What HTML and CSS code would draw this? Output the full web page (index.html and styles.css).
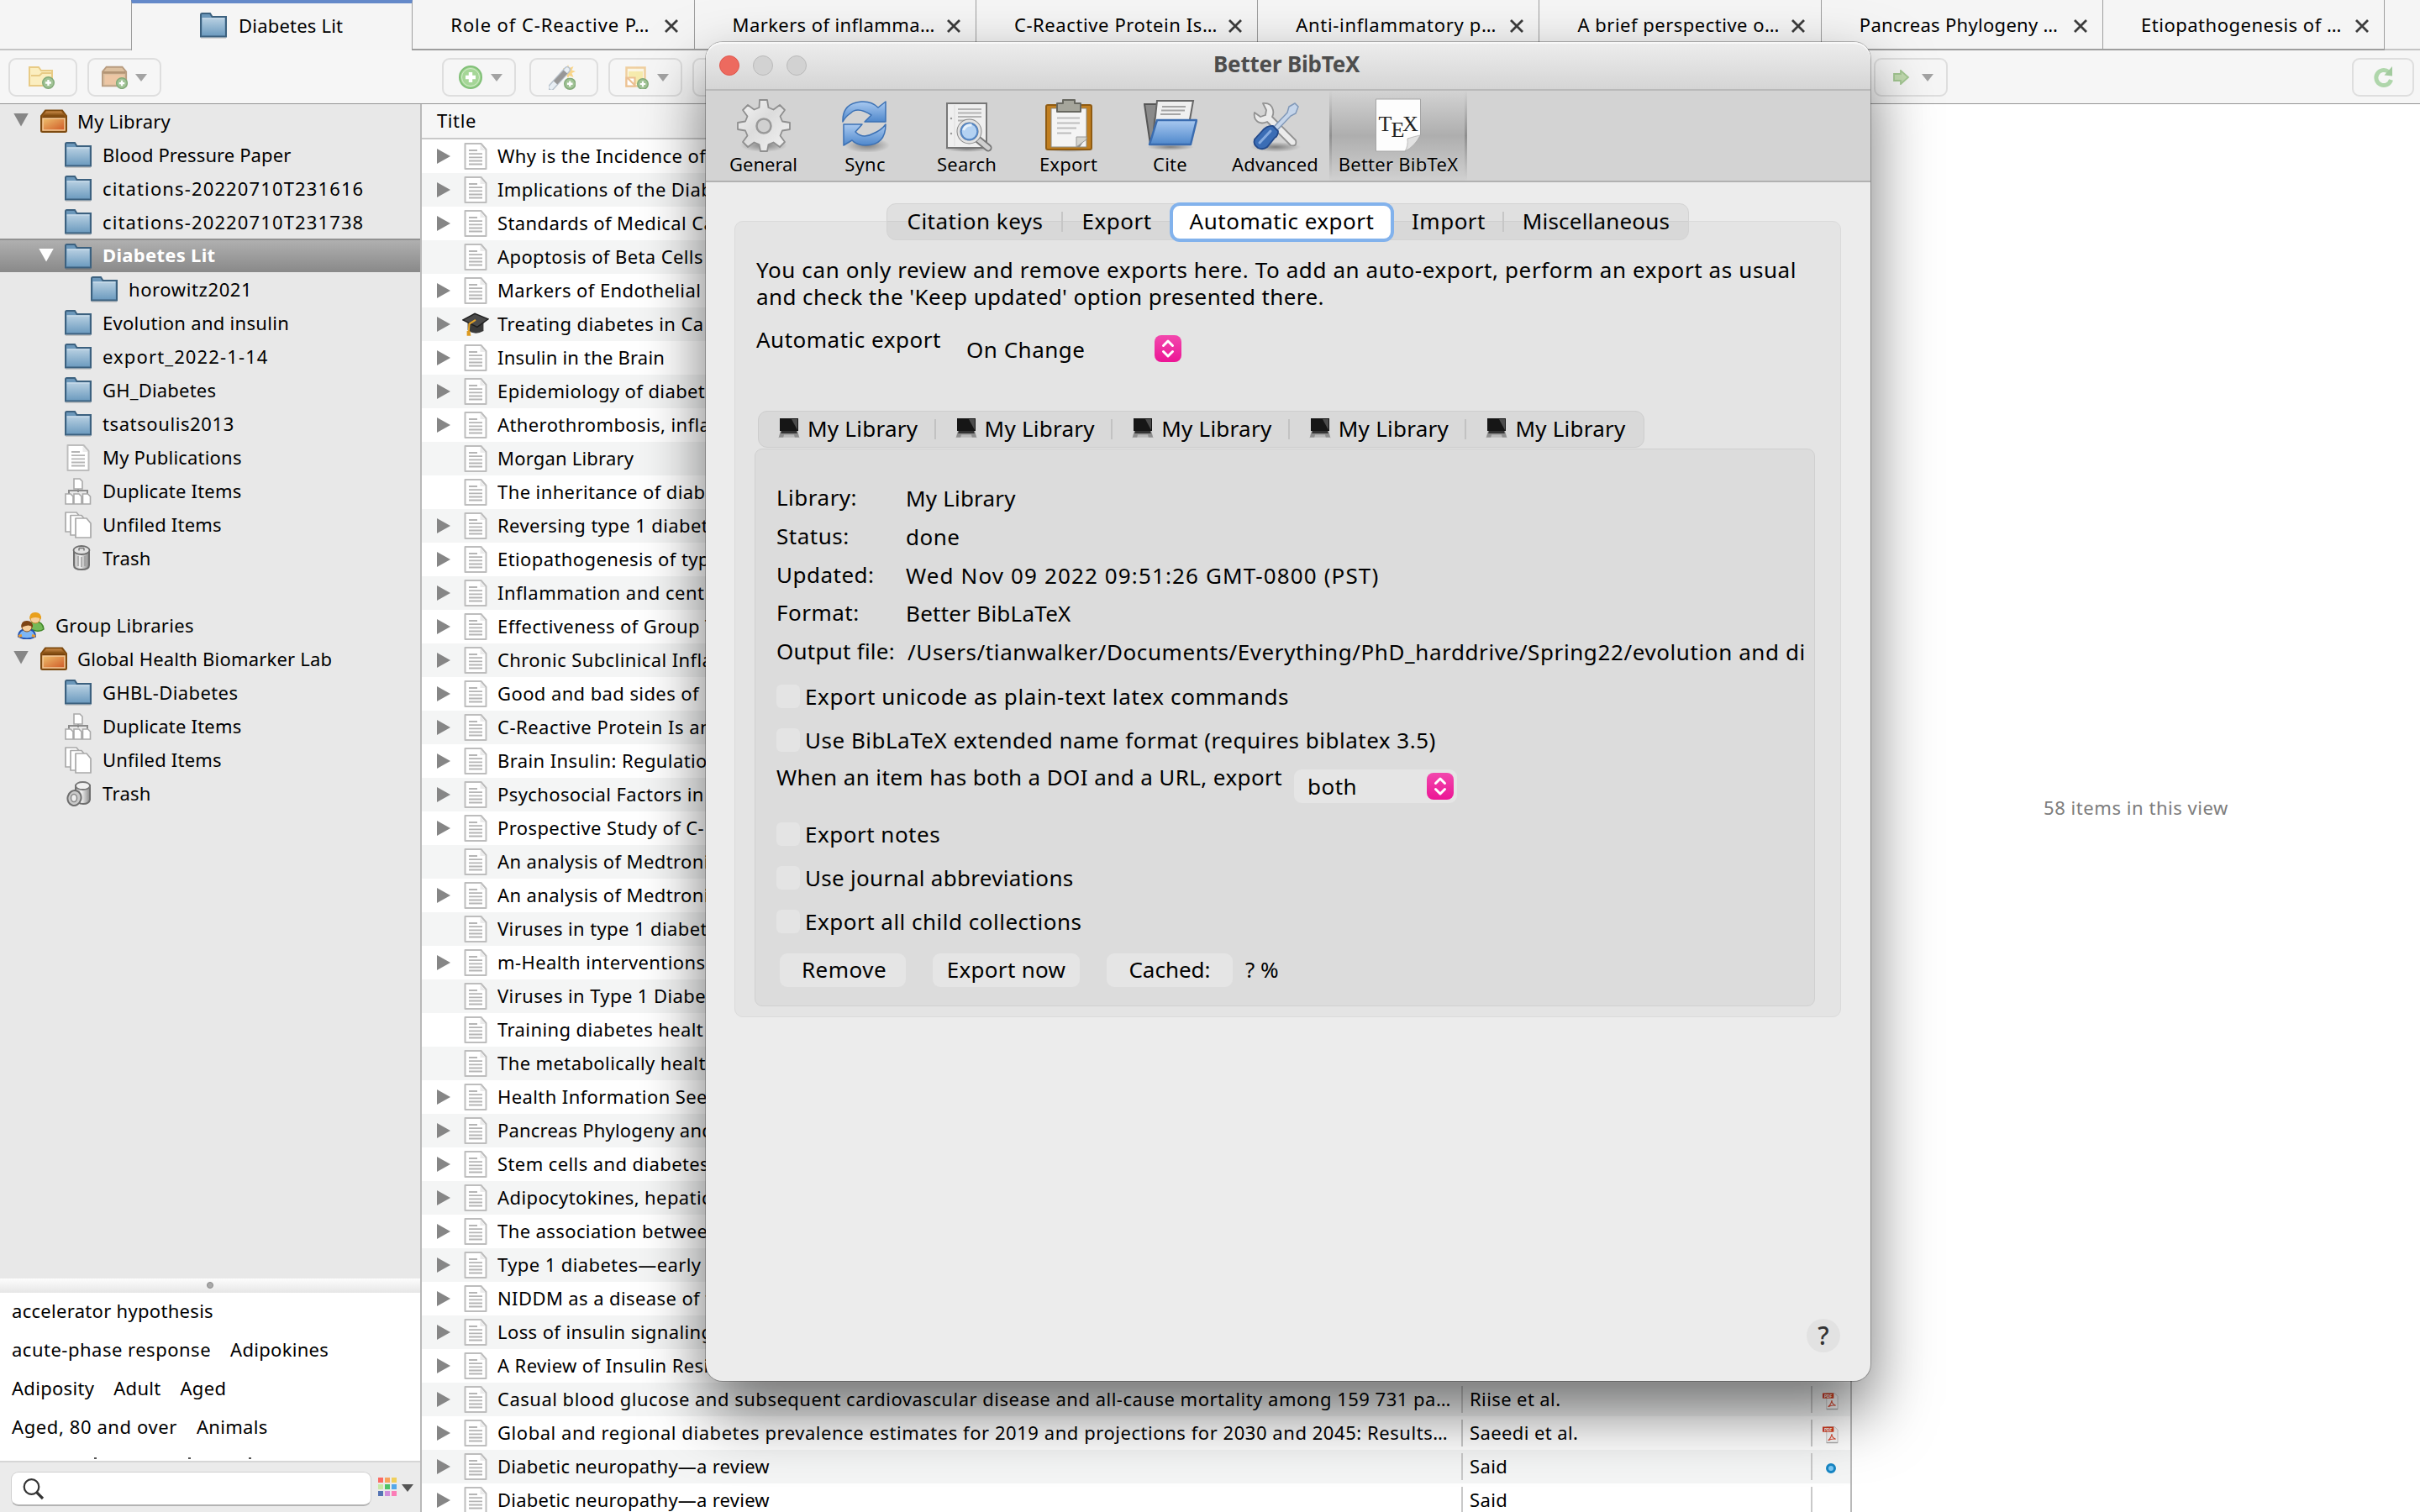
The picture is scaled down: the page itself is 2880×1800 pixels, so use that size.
FILE: index.html
```html
<!DOCTYPE html>
<html lang="en">
<head>
<meta charset="utf-8">
<title>Diabetes Lit</title>
<link rel="stylesheet" href="styles.css">
</head>
<body>
<div class="app">
  <header class="tabs">
    <div class="tab-gap"></div>
    <div class="tab on"><svg class="i32"><use href="#folder"/></svg><span class="t">Diabetes Lit</span></div>
    <div class="tab"><span class="t k9">Role of C-Reactive P…</span><svg class="cx"><use href="#x"/></svg></div>
    <div class="tab"><span class="t k4">Markers of inflamma…</span><svg class="cx"><use href="#x"/></svg></div>
    <div class="tab"><span class="t k6">C-Reactive Protein Is…</span><svg class="cx"><use href="#x"/></svg></div>
    <div class="tab"><span class="t k7">Anti-inflammatory p…</span><svg class="cx"><use href="#x"/></svg></div>
    <div class="tab"><span class="t k5">A brief perspective o…</span><svg class="cx"><use href="#x"/></svg></div>
    <div class="tab"><span class="t k3">Pancreas Phylogeny …</span><svg class="cx"><use href="#x"/></svg></div>
    <div class="tab"><span class="t k5">Etiopathogenesis of …</span><svg class="cx"><use href="#x"/></svg></div>
    <div class="tab-rest"></div>
  </header>

  <div class="bar">
    <div class="bar-left">
      <span class="btn w82"><svg class="bi" viewBox="0 0 32 30"><path d="M2 3h11l3 4h13v18H2z" fill="#fbeec0" stroke="#e8cb86" stroke-width="2"/><path d="M4 13h10l3-3h11" fill="none" stroke="#e8cb86" stroke-width="2"/><use href="#plus" x="17" y="14" width="15" height="15"/></svg></span>
      <span class="btn w88"><svg class="bi" viewBox="0 0 34 30"><path d="M6 2h20l5 6v18H1V8z" fill="#dcc0a0" stroke="#b89c80" stroke-width="2"/><path d="M2 9h28" stroke="#b39474" stroke-width="3"/><path d="M4 12h24v12H4z" fill="#edc6a4"/><use href="#plus" x="18" y="15" width="15" height="15"/></svg><svg class="dd"><use href="#tri"/></svg></span>
    </div>
    <div class="bar-mid">
      <span class="btn w88"><svg class="bi28" viewBox="0 0 28 28"><circle cx="14" cy="14" r="13" fill="#a5d697" stroke="#81c077" stroke-width="2"/><circle cx="14" cy="14" r="10.500" fill="none" stroke="#d3ecca" stroke-width="1"/><path d="M14 8v12M8 14h12" stroke="#fff" stroke-width="4.400"/></svg><svg class="dd"><use href="#tri"/></svg></span>
      <span class="btn w82"><svg class="bi" viewBox="0 0 32 30"><path d="M23 0l1.500 4 5-2-2 4.500 4.500 1.500-4.500 2 2 5-5-2-1.500 3-2-4-4-1 2-3-2-4 4 1z" fill="#f9d58a"/><path d="M3 27L22 6" stroke="#b9c3cd" stroke-width="8" stroke-linecap="round"/><path d="M3 27L22 6" stroke="#e8eef4" stroke-width="5" stroke-linecap="round"/><path d="M8 21.500L20 8.500" stroke="#979797" stroke-width="6"/><use href="#plus" x="18" y="15.500" width="14.500" height="14.500"/></svg></span>
      <span class="btn w88"><svg class="bi28" viewBox="0 0 28 28"><path d="M1.500 2.500h22v22h-22z" fill="#fbf6e4" stroke="#f0cf9f" stroke-width="2.500"/><path d="M4 7h17v15H4z" fill="#f6ebad"/><path d="M1.500 14.500h10v10h-10z M3 15l9 9" fill="#fff" stroke="#ecc193" stroke-width="2.200"/><use href="#plus" x="14" y="15" width="14" height="14"/></svg><svg class="dd"><use href="#tri"/></svg></span>
      <span class="btn w88"></span>
    </div>
    <div class="bar-right">
      <span class="btn w86"><svg class="arr" viewBox="0 0 20 18"><path d="M1 5h8V1l9 8-9 8v-4H1z" fill="#c2dbb0" stroke="#a4c893" stroke-width="1.800"/></svg><svg class="dd"><use href="#tri"/></svg></span>
      <span class="btn w74"><svg class="ref" viewBox="0 0 26 28"><path d="M21.500 17a9 9 0 1 1-3-9.500" fill="none" stroke="#afd6ab" stroke-width="5"/><path d="M13.500 11.500L23 12.500V1z" fill="#a3cb9f"/></svg></span>
    </div>
  </div>

  <main class="main">
    <aside class="side">
      <ul class="tree">
        <li class="l0"><i class="dn"></i><svg class="bx"><use href="#box"/></svg><span class="t">My Library</span></li>
        <li class="l1"><svg class="i32"><use href="#folder"/></svg><span class="t k1">Blood Pressure Paper</span></li>
        <li class="l1"><svg class="i32"><use href="#folder"/></svg><span class="t k11">citations-20220710T231616</span></li>
        <li class="l1"><svg class="i32"><use href="#folder"/></svg><span class="t k11">citations-20220710T231738</span></li>
        <li class="l1 sel"><i class="dn"></i><svg class="i32"><use href="#folder"/></svg><span class="t k3">Diabetes Lit</span></li>
        <li class="l2"><svg class="i32"><use href="#folder"/></svg><span class="t k6">horowitz2021</span></li>
        <li class="l1"><svg class="i32"><use href="#folder"/></svg><span class="t k3">Evolution and insulin</span></li>
        <li class="l1"><svg class="i32"><use href="#folder"/></svg><span class="t k11">export_2022-1-14</span></li>
        <li class="l1"><svg class="i32"><use href="#folder"/></svg><span class="t">GH_Diabetes</span></li>
        <li class="l1"><svg class="i32"><use href="#folder"/></svg><span class="t k6">tsatsoulis2013</span></li>
        <li class="l1"><svg class="d32"><use href="#doc"/></svg><span class="t">My Publications</span></li>
        <li class="l1"><svg class="i32"><use href="#dup"/></svg><span class="t">Duplicate Items</span></li>
        <li class="l1"><svg class="i32"><use href="#unf"/></svg><span class="t">Unfiled Items</span></li>
        <li class="l1"><svg class="tr"><use href="#trash"/></svg><span class="t k3">Trash</span></li>
        <li></li>
        <li class="lg"><svg class="i32"><use href="#people"/></svg><span class="t k3">Group Libraries</span></li>
        <li class="l0"><i class="dn"></i><svg class="bx"><use href="#box"/></svg><span class="t">Global Health Biomarker Lab</span></li>
        <li class="l1"><svg class="i32"><use href="#folder"/></svg><span class="t k4">GHBL-Diabetes</span></li>
        <li class="l1"><svg class="i32"><use href="#dup"/></svg><span class="t">Duplicate Items</span></li>
        <li class="l1"><svg class="i32"><use href="#unf"/></svg><span class="t">Unfiled Items</span></li>
        <li class="l1"><svg class="tr2"><use href="#trash2"/></svg><span class="t k3">Trash</span></li>
      </ul>
      <div class="split"><i></i></div>
      <div class="tags">
        <p><span class="k3">accelerator hypothesis</span></p>
        <p><span class="k5">acute-phase response</span><span>Adipokines</span></p>
        <p><span>Adiposity</span><span>Adult</span><span>Aged</span></p>
        <p><span class="k6">Aged, 80 and over</span><span>Animals</span></p>
        <p class="cut"><i></i><i></i><i></i></p>
      </div>
      <div class="find">
        <div class="field"><svg viewBox="0 0 28 28"><circle cx="11.500" cy="11" r="8.800" fill="none" stroke="#333" stroke-width="2.200"/><path d="M17.500 17.500L25 25" stroke="#333" stroke-width="3.200"/></svg></div>
        <div class="sw"><i class="c1"></i><i class="c2"></i><i class="c3"></i><i class="c4"></i><i class="c5"></i><i class="c6"></i><i class="c7"></i><i class="c8"></i><i class="c9"></i></div>
        <svg class="dd dark"><use href="#tri"/></svg>
      </div>
    </aside>

    <section class="list">
      <div class="head">Title</div>
      <ul class="rows">
        <li><i class="tw"></i><svg><use href="#doc"/></svg><span class="t">Why is the Incidence of</span></li>
        <li><i class="tw"></i><svg><use href="#doc"/></svg><span class="t">Implications of the Diab</span></li>
        <li><i class="tw"></i><svg><use href="#doc"/></svg><span class="t">Standards of Medical Ca</span></li>
        <li><i class="tw no"></i><svg><use href="#doc"/></svg><span class="t">Apoptosis of Beta Cells</span></li>
        <li><i class="tw"></i><svg><use href="#doc"/></svg><span class="t">Markers of Endothelial</span></li>
        <li><i class="tw"></i><svg class="cap"><use href="#cap"/></svg><span class="t">Treating diabetes in Ca</span></li>
        <li><i class="tw"></i><svg><use href="#doc"/></svg><span class="t k2">Insulin in the Brain</span></li>
        <li><i class="tw"></i><svg><use href="#doc"/></svg><span class="t">Epidemiology of diabete</span></li>
        <li><i class="tw"></i><svg><use href="#doc"/></svg><span class="t">Atherothrombosis, infla</span></li>
        <li><i class="tw no"></i><svg><use href="#doc"/></svg><span class="t k2">Morgan Library</span></li>
        <li><i class="tw no"></i><svg><use href="#doc"/></svg><span class="t">The inheritance of diab</span></li>
        <li><i class="tw"></i><svg><use href="#doc"/></svg><span class="t">Reversing type 1 diabet</span></li>
        <li><i class="tw"></i><svg><use href="#doc"/></svg><span class="t">Etiopathogenesis of typ</span></li>
        <li><i class="tw"></i><svg><use href="#doc"/></svg><span class="t k5">Inflammation and centr</span></li>
        <li><i class="tw"></i><svg><use href="#doc"/></svg><span class="t">Effectiveness of Group T</span></li>
        <li><i class="tw"></i><svg><use href="#doc"/></svg><span class="t">Chronic Subclinical Infla</span></li>
        <li><i class="tw"></i><svg><use href="#doc"/></svg><span class="t">Good and bad sides of</span></li>
        <li><i class="tw"></i><svg><use href="#doc"/></svg><span class="t k5">C-Reactive Protein Is an</span></li>
        <li><i class="tw"></i><svg><use href="#doc"/></svg><span class="t">Brain Insulin: Regulatio</span></li>
        <li><i class="tw"></i><svg><use href="#doc"/></svg><span class="t">Psychosocial Factors in</span></li>
        <li><i class="tw"></i><svg><use href="#doc"/></svg><span class="t">Prospective Study of C-</span></li>
        <li><i class="tw no"></i><svg><use href="#doc"/></svg><span class="t">An analysis of Medtroni</span></li>
        <li><i class="tw"></i><svg><use href="#doc"/></svg><span class="t">An analysis of Medtroni</span></li>
        <li><i class="tw no"></i><svg><use href="#doc"/></svg><span class="t">Viruses in type 1 diabet</span></li>
        <li><i class="tw"></i><svg><use href="#doc"/></svg><span class="t">m-Health interventions</span></li>
        <li><i class="tw no"></i><svg><use href="#doc"/></svg><span class="t">Viruses in Type 1 Diabe</span></li>
        <li><i class="tw no"></i><svg><use href="#doc"/></svg><span class="t">Training diabetes healt</span></li>
        <li><i class="tw no"></i><svg><use href="#doc"/></svg><span class="t">The metabolically healt</span></li>
        <li><i class="tw"></i><svg><use href="#doc"/></svg><span class="t">Health Information Seek</span></li>
        <li><i class="tw"></i><svg><use href="#doc"/></svg><span class="t k2">Pancreas Phylogeny and</span></li>
        <li><i class="tw"></i><svg><use href="#doc"/></svg><span class="t">Stem cells and diabetes</span></li>
        <li><i class="tw"></i><svg><use href="#doc"/></svg><span class="t">Adipocytokines, hepatic</span></li>
        <li><i class="tw"></i><svg><use href="#doc"/></svg><span class="t">The association betwee</span></li>
        <li><i class="tw"></i><svg><use href="#doc"/></svg><span class="t">Type 1 diabetes—early</span></li>
        <li><i class="tw"></i><svg><use href="#doc"/></svg><span class="t">NIDDM as a disease of t</span></li>
        <li><i class="tw"></i><svg><use href="#doc"/></svg><span class="t">Loss of insulin signaling</span></li>
        <li><i class="tw"></i><svg><use href="#doc"/></svg><span class="t">A Review of Insulin Resi</span></li>
        <li><i class="tw"></i><svg><use href="#doc"/></svg><span class="t k5">Casual blood glucose and subsequent cardiovascular disease and all-cause mortality among 159 731 pa…</span><span class="by">Riise et al.</span><span class="at"><svg class="pdf"><use href="#pdf"/></svg></span></li>
        <li><i class="tw"></i><svg><use href="#doc"/></svg><span class="t k55">Global and regional diabetes prevalence estimates for 2019 and projections for 2030 and 2045: Results…</span><span class="by">Saeedi et al.</span><span class="at"><svg class="pdf"><use href="#pdf"/></svg></span></li>
        <li><i class="tw"></i><svg><use href="#doc"/></svg><span class="t k25">Diabetic neuropathy—a review</span><span class="by">Said</span><span class="at"><i class="dot"></i></span></li>
        <li><i class="tw"></i><svg><use href="#doc"/></svg><span class="t k25">Diabetic neuropathy—a review</span><span class="by">Said</span><span class="at"></span></li>
      </ul>
    </section>

    <section class="info"><span class="k55">58 items in this view</span></section>
  </main>
</div>

<div class="win">
  <div class="title"><i class="red"></i><i></i><i></i><b>Better BibTeX</b></div>
  <nav class="panes">
    <div class="pane"><svg viewBox="0 0 64 64"><ellipse cx="32" cy="56" rx="28" ry="8" fill="url(#gShade)"/><path d="M27 2h9l1.500 9 6 2.500L51 8l6 6-5.500 7.500 2.500 6 9 1.500v8l-9 1.500-2.500 6L57 52l-6 6-7.500-5.500-6 2.500-1.500 8h-8l-1.500-8-6-2.500L13 58l-6-6 5.500-7.500-2.500-6L1 37v-8l9-1.500 2.500-6L7 14l6-6 7.500 5.500 6-2.500z" fill="url(#gGear)" stroke="#8f8f8f" stroke-width="1.800" stroke-linejoin="round"/><circle cx="32" cy="33" r="8.500" fill="#d0d0d0" stroke="#999" stroke-width="2.500"/></svg><span class="k0">General</span></div>
    <div class="pane"><svg viewBox="0 0 64 64"><ellipse cx="34" cy="56" rx="27" ry="9" fill="url(#gShade)"/><g stroke="#3d72b5" stroke-width="1.500" stroke-linejoin="round"><path d="M5 28Q4 6 27 4q12-1 20 7l9-7v24H31l8-8Q22 9 14 18q-6 4-9 10z" fill="url(#gBlue)"/><path d="M56 31q0 25-24 25-10 0-16-6l-10 6V31h22l-8 9q9 9 21 2 10-4 15-11z" fill="url(#gBlue)"/></g></svg><span>Sync</span></div>
    <div class="pane"><svg viewBox="0 0 64 64"><ellipse cx="32" cy="60" rx="28" ry="4" fill="url(#gShade)"/><path d="M8 6h47v53H8z" fill="#efefef" stroke="#777" stroke-width="2"/><path d="M21 13h28M21 17.500h28M21 22h28M21 26.500h16" stroke="#b3b3b3" stroke-width="2"/><path d="M17 8v49" stroke="#ddd" stroke-width="1"/><circle cx="13" cy="24" r="1.200" fill="#999"/><circle cx="13" cy="42" r="1.200" fill="#999"/><path d="M45 49l12 10" stroke="#777" stroke-width="9" stroke-linecap="round"/><path d="M45 49l12 10" stroke="#cfcfcf" stroke-width="5.500" stroke-linecap="round"/><circle cx="34.500" cy="39.500" r="12.500" fill="#a9cbf0" stroke="#888" stroke-width="5"/><circle cx="34.500" cy="39.500" r="12.500" fill="none" stroke="#e3e3e3" stroke-width="3"/><circle cx="34.500" cy="39.500" r="9.800" fill="#b4d2f2" stroke="#5687c4" stroke-width="2"/><path d="M27.500 38q3-7 10-6" stroke="#e6f1fc" stroke-width="3" fill="none"/></svg><span>Search</span></div>
    <div class="pane"><svg viewBox="0 0 64 64"><ellipse cx="32" cy="61" rx="30" ry="3" fill="url(#gShade)"/><rect x="5" y="8" width="54" height="53" rx="2" fill="#c17f20" stroke="#8f5b12" stroke-width="2"/><path d="M11 12h42v46H11z" fill="#f4f4f4" stroke="#8a8a80" stroke-width="1"/><path d="M18 23.500h27M18 29.500h27M18 35.500h23M18 41.500h17" stroke="#bdbdbd" stroke-width="2"/><path d="M53 46H41v12h4z" fill="#8c8c88"/><path d="M41 58V46l12 0v3z" fill="#d5d5d0" stroke="#999" stroke-width="1"/><path d="M25 2h14v4h7v10H18V6h7z" fill="#a5a59b" stroke="#67675f" stroke-width="2" stroke-linejoin="round"/></svg><span>Export</span></div>
    <div class="pane"><svg viewBox="0 0 64 64"><ellipse cx="32" cy="58" rx="28" ry="4" fill="url(#gShade)"/><path d="M1 7h16l-4 20-2 28H8z" fill="#8a8a8a" stroke="#555" stroke-width="2"/><path d="M16 3h43l-5 28-42 10z" fill="#f0f0f0" stroke="#666" stroke-width="2"/><path d="M22 10h28M21 14.500h28M20 19h24" stroke="#a5a5a5" stroke-width="2"/><path d="M16 26h47l-7 29H7z" fill="url(#gBlue)" stroke="#3a6cb0" stroke-width="2.500" stroke-linejoin="round"/></svg><span>Cite</span></div>
    <div class="pane adv"><svg viewBox="0 0 64 64"><ellipse cx="32" cy="58" rx="30" ry="6" fill="url(#gShade)"/><path d="M17 6q10-1 12 8 1 5-1 8l28 28q2 8-6 6L22 28q-9 4-14-3-2-4-1-8l7 5 6-2 1-6z" fill="#ebebeb" stroke="#929292" stroke-width="1.800" stroke-linejoin="round"/><path d="M48 10l7-4 4 4-3 8-6 3-16 17-4-4 16-17z" fill="#c5d5ea" stroke="#8098b8" stroke-width="1.500"/><path d="M29 33l6 6q0 6-4 8l-9 11q-5 4-11 1-6-4-4-10l9-10q6-7 13-6z" fill="#3b6db5" stroke="#23498a" stroke-width="1.800"/><path d="M26 39L13 53" stroke="#86abdf" stroke-width="3" stroke-linecap="round"/></svg><span>Advanced</span></div>
    <div class="pane bbt"><svg viewBox="0 0 64 64"><path d="M5.500 1h53v43q-3 8-18 19h-35z" fill="#fdfdfd" stroke="#a5a5a5" stroke-width="1"/><path d="M58 44q-5 1-15 4 1 9-3 15 12-6 18-19z" fill="#e2e2e2" stroke="#b0b0b0" stroke-width=".8"/><text class="tex" x="8.500" y="39">T</text><text class="tex" x="23.500" y="46">E</text><text class="tex" x="37" y="39">X</text></svg><span>Better BibTeX</span></div>
  </nav>
  <div class="body">
    <div class="seg">
      <span class="s1">Citation keys</span><span class="s2">Export</span><span class="s3 cur">Automatic export</span><span class="s4">Import</span><span class="s5 k2">Miscellaneous</span>
    </div>
    <div class="panel">
      <p class="note"><span class="k6">You can only review and remove exports here. To add an auto-export, perform an export as usual</span><br><span class="k4">and check the 'Keep updated' option presented there.</span></p>
      <div class="auto"><label>Automatic export</label><span class="pop">On Change</span><svg class="st"><use href="#step"/></svg></div>
      <div class="libs">
        <span><svg><use href="#laptop"/></svg>My Library</span><span><svg><use href="#laptop"/></svg>My Library</span><span><svg><use href="#laptop"/></svg>My Library</span><span><svg><use href="#laptop"/></svg>My Library</span><span><svg><use href="#laptop"/></svg>My Library</span>
      </div>
      <div class="job">
        <dl>
          <dt>Library:</dt><dd class="k2">My Library</dd>
          <dt>Status:</dt><dd>done</dd>
          <dt>Updated:</dt><dd class="k11">Wed Nov 09 2022 09:51:26 GMT-0800 (PST)</dd>
          <dt>Format:</dt><dd class="k25">Better BibLaTeX</dd>
          <dt class="k25">Output file:</dt><dd class="path k6">/Users/tianwalker/Documents/Everything/PhD_harddrive/Spring22/evolution and di</dd>
        </dl>
        <div class="chk"><i></i><span class="k65">Export unicode as plain-text latex commands</span></div>
        <div class="chk"><i></i><span class="k5">Use BibLaTeX extended name format (requires biblatex 3.5)</span></div>
        <div class="doi"><label class="k4">When an item has both a DOI and a URL, export</label><span class="pop2">both<svg class="st"><use href="#step"/></svg></span></div>
        <div class="chk"><i></i><span>Export notes</span></div>
        <div class="chk"><i></i><span class="k3">Use journal abbreviations</span></div>
        <div class="chk"><i></i><span>Export all child collections</span></div>
        <div class="acts"><span class="b1">Remove</span><span class="b2 k3">Export now</span><span class="b3 k0">Cached:</span><label class="k0">? %</label></div>
      </div>
    </div>
    <div class="help">?</div>
  </div>
</div>

<svg class="defs" width="0" height="0" aria-hidden="true">
  <defs>
    <linearGradient id="gFolder" x1="0" y1="0" x2="0" y2="1"><stop offset="0" stop-color="#b4cde0"/><stop offset="1" stop-color="#6f9dc0"/></linearGradient>
    <linearGradient id="gBox" x1="0" y1="0" x2="1" y2="1"><stop offset="0" stop-color="#eebf6c"/><stop offset="1" stop-color="#cf5a27"/></linearGradient>
    <linearGradient id="gLid" x1="0" y1="0" x2="0" y2="1"><stop offset="0" stop-color="#c98a48"/><stop offset="1" stop-color="#7c470c"/></linearGradient>
    <linearGradient id="gSteel" x1="0" y1="0" x2="1" y2="0"><stop offset="0" stop-color="#b5b5b5"/><stop offset=".4" stop-color="#f2f2f2"/><stop offset="1" stop-color="#8a8a8a"/></linearGradient>
    <linearGradient id="gGear" x1="0" y1="0" x2="1" y2="1"><stop offset="0" stop-color="#f6f6f6"/><stop offset=".45" stop-color="#dcdcdc"/><stop offset="1" stop-color="#f4f4f4"/></linearGradient>
    <linearGradient id="gBlue" x1="0" y1="0" x2="0" y2="1"><stop offset="0" stop-color="#a9c9f0"/><stop offset="1" stop-color="#4f88cc"/></linearGradient>
    <linearGradient id="gPink" x1="0" y1="0" x2="0" y2="1"><stop offset="0" stop-color="#f248ad"/><stop offset="1" stop-color="#ec1595"/></linearGradient>
    <radialGradient id="gShade"><stop offset="0" stop-color="#000" stop-opacity=".4"/><stop offset="1" stop-color="#000" stop-opacity="0"/></radialGradient>
  </defs>
  <symbol id="folder" viewBox="0 0 32 32">
    <path d="M1 29.500h30v1.500H1z" fill="#000" opacity=".15"/>
    <path d="M1 28.500V2.500Q1 1 2.500 1H12l2.500 4H31v23.500z" fill="#6b97ba" stroke="#3c617f" stroke-width="2"/>
    <path d="M2.500 7.500h27v19.500h-27z" fill="url(#gFolder)"/>
    <path d="M2.500 7h27" stroke="#d3e3ef" stroke-width="1.500"/>
  </symbol>
  <symbol id="box" viewBox="0 0 32 28">
    <path d="M6 1.500h20L31 8v17.500q0 1.500-1.500 1.500h-27Q1 27 1 25.500V8z" fill="#a3621f" stroke="#7d4a10" stroke-width="2"/>
    <path d="M7 2.500h18l4 5.500H3z" fill="url(#gLid)"/>
    <path d="M2.500 8.500h27v2h-27z" fill="#6d3c08"/>
    <path d="M3 11h26v14H3z" fill="url(#gBox)" stroke="#f3c998" stroke-width="1.500"/>
  </symbol>
  <symbol id="doc" viewBox="0 0 28 32">
    <path d="M1.500 1h19L26.500 8v23h-25z" fill="#fff" stroke="#bdbdbd" stroke-width="2" stroke-linejoin="round"/>
    <path d="M19.500 2v7h6z" fill="#ececec"/>
    <path d="M6 9h10M6 13.200h16M6 17.400h16M6 21.500h16M6 25.500h16" stroke="#b5b5b5" stroke-width="1.800"/>
  </symbol>
  <symbol id="dup" viewBox="0 0 32 32">
    <path d="M16 12v5M5 19v-4h22v4" fill="none" stroke="#8c8c8c" stroke-width="2"/>
    <g fill="#fff" stroke="#a9a9a9" stroke-width="1.600"><path d="M11 1h7l3 3v9H11z"/><path d="M1 19h6l3 3v9H1zM11 19h6l3 3v9h-9zM21.500 19h6l3 3v9h-9z"/></g>
  </symbol>
  <symbol id="unf" viewBox="0 0 32 32">
    <g fill="#fff" stroke="#a9a9a9" stroke-width="1.700" stroke-linejoin="round"><path d="M1 1h13l4 5v18H1z"/><path d="M7 4.500h13l4 5V28H7z"/><path d="M13 8h13l5 6v17H13z"/></g>
  </symbol>
  <symbol id="trash" viewBox="0 0 24 30">
    <path d="M3 6v18q0 5 9 5t9-5V6z" fill="url(#gSteel)" stroke="#6e6e6e" stroke-width="2"/>
    <path d="M8 13v12M12 14v12M16 13v12" stroke="#999" stroke-width="1.400"/>
    <ellipse cx="12" cy="6" rx="9.500" ry="5" fill="#e2e2e2" stroke="#6e6e6e" stroke-width="1.800"/>
    <path d="M9 3.500v3M15 3.500v3M9 3.500h6" stroke="#777" stroke-width="1.500" fill="none"/>
  </symbol>
  <symbol id="trash2" viewBox="0 0 30 30">
    <path d="M11 5v17q2 5 9 5t8-5V5z" fill="url(#gSteel)" stroke="#6e6e6e" stroke-width="2"/>
    <ellipse cx="19.500" cy="5.500" rx="8.500" ry="4.500" fill="#f0f0f0" stroke="#777" stroke-width="1.800"/>
    <ellipse cx="9.500" cy="20" rx="8" ry="9" fill="#c9c9c9" stroke="#6e6e6e" stroke-width="2" transform="rotate(15 9.500 20)"/>
    <ellipse cx="9" cy="20" rx="3.500" ry="4.500" fill="#eee" stroke="#888" stroke-width="1.500"/>
  </symbol>
  <symbol id="people" viewBox="0 0 32 32">
    <path d="M13 20q1-9 8-9 9 0 10 9-3 3-9 2z" fill="#74b957" stroke="#3f8627" stroke-width="1.500"/>
    <circle cx="21" cy="7" r="6" fill="#f7cf9c" stroke="#c98a2a" stroke-width="1"/>
    <path d="M14.500 8q-1-8 6.500-8t7 8q-7-4-13.500 0z" fill="#e9a01c"/>
    <path d="M1 29q0-9 10-9t10 9q-10 5-20 0z" fill="#7db6f5" stroke="#1d4fb0" stroke-width="1.800"/>
    <circle cx="11" cy="17" r="6" fill="#f7cf9c" stroke="#8a5520" stroke-width="1"/>
    <path d="M4.500 18q-1-8 6.500-8t7 8q-4-5-13.500 0z" fill="#7d4414"/>
    <path d="M1 28.500l4-1M21 28.500l-4-1" stroke="#e79a34" stroke-width="3"/>
  </symbol>
  <symbol id="cap" viewBox="0 0 34 30">
    <path d="M7 12v10q9 7 20 1V11z" fill="#3a3a3a"/>
    <path d="M1 9L16 1l17 7-14 10z" fill="#4a4a4a" stroke="#1f1f1f" stroke-width="1.500"/>
    <path d="M17 9L9 14 8 27" fill="none" stroke="#e5a52a" stroke-width="2.200"/>
    <path d="M6 23h4l1 6H6z" fill="#dd9a20"/>
  </symbol>
  <symbol id="x" viewBox="0 0 18 18"><path d="M2 2l14 14M16 2L2 16" stroke="#3c3c3c" stroke-width="2.800"/></symbol>
  <symbol id="tri" viewBox="0 0 14 9"><path d="M0 0h14L7 9z" fill="currentColor"/></symbol>
  <symbol id="plus" viewBox="0 0 14 14"><circle cx="7" cy="7" r="6.300" fill="#a1c396" stroke="#82aa78" stroke-width="1.400"/><path d="M7 3.800v6.400M3.800 7h6.400" stroke="#fff" stroke-width="2.200"/></symbol>
  <symbol id="laptop" viewBox="0 0 26 26">
    <path d="M2 1h22v15H2z" fill="#161616"/><path d="M16 2h7v13z" fill="#4c4c4c"/>
    <path d="M3 16h20l2.500 8.500H.5z" fill="#8e8e8e"/><path d="M4 16h18l.8 3H3.200z" fill="#333"/><path d="M7 20.500h12l1 4H6z" fill="#b9b9b9"/><path d="M.5 24.500h25" stroke="#d8d8d8" stroke-width="1.500"/>
  </symbol>
  <symbol id="step" viewBox="0 0 32 32"><rect width="32" height="32" rx="8" fill="url(#gPink)"/><path d="M10.500 12.500L16 7l5.500 5.500M10.500 19.500L16 25l5.500-5.500" fill="none" stroke="#fff" stroke-width="3" stroke-linecap="round" stroke-linejoin="round"/></symbol>
  <symbol id="pdf" viewBox="0 0 20 22">
    <path d="M5 1h10l4 4v16H5z" fill="#fafafa" stroke="#c6c6c6"/><path d="M5 21h14" stroke="#a9a9a9" stroke-width="1.500"/>
    <path d="M0 1h14v6.500H0z" fill="#d63a1e"/>
    <path d="M7 18q4-3 4.500-8 0 5 5 6.500-5-1-9.500 1.500z" fill="none" stroke="#d9503a" stroke-width="1.200"/>
    <text x="7" y="6.300" text-anchor="middle" class="pdf-t">PDF</text>
  </symbol>
</svg>
</body>
</html>
```
FILE: styles.css
```css
* { box-sizing: border-box; }
body { margin: 0; width: 2880px; height: 1800px; overflow: hidden; background: #fff; color: #000; font: 22px/40px "Noto Sans", "Open Sans", sans-serif; }
ul, dl, dd, p { margin: 0; padding: 0; list-style: none; }
i { display: block; flex: none; }
svg { display: block; flex: none; }
.defs { position: absolute; }
.t { white-space: nowrap; }
.app { display: flex; flex-direction: column; height: 1800px; }

/* tab strip */
.tabs { display: flex; height: 60px; background: #f5f5f5; }
.tab-gap { width: 156px; border-bottom: 2px solid #c4c4c4; }
.tab { width: 335.3px; padding-left: 45px; display: flex; align-items: center; border-right: 1px solid #9e9e9e; border-bottom: 2px solid #9e9e9e; line-height: 60px; }
.tab .t { width: 254px; overflow: hidden; padding-bottom: 1px; }
.tab.on { border: 1px solid #9e9e9e; border-top: 4px solid #6489c9; border-bottom: 0; padding: 0 0 0 81px; gap: 14px; }
.tab.on .t { padding-bottom: 4px; letter-spacing: .2px; }
.tab.on svg { margin-bottom: 2px; }
.cx { width: 18px; height: 18px; margin-top: 4px; }
.tab-rest { flex: 1; border-bottom: 2px solid #c4c4c4; }
.i32 { width: 32px; height: 32px; }

/* toolbar */
.bar { height: 64px; display: flex; background: #f6f6f6; border-bottom: 1px solid #969696; padding: 9px 7px 0 10px; }
.bar-left, .bar-mid, .bar-right { display: flex; gap: 12px; }
.bar-left { width: 516px; }
.bar-mid { gap: 0; width: 1704px; }
.bar-mid .btn { margin-right: 12px; }
.bar-mid .btn:first-child { margin-right: 16px; }
.bar-right { flex: 1; justify-content: space-between; }
.btn { height: 46px; border: 2px solid #dedede; border-radius: 9px; display: flex; align-items: center; padding-left: 18px; gap: 10px; }
.bar-left .w88 { padding-left: 15px; gap: 8px; }
.w82 { width: 82px; padding-left: 21px; } .w88 { width: 88px; } .w86 { width: 88px; padding-left: 21px; gap: 14px; } .w74 { width: 74px; padding-left: 23px; }
.bi { width: 32px; height: 30px; } .bi28 { width: 28px; height: 28px; }
.arr { width: 20px; height: 18px; } .ref { width: 26px; height: 28px; }
.dd { width: 14px; height: 9px; color: #a3a3a3; }
.dd.dark { color: #555; }

.main { flex: 1; display: flex; min-height: 0; }

/* collections */
.side { width: 502px; border-right: 2px solid #b9b9b9; background: #e8e8e8; display: flex; flex-direction: column; }
.tree { height: 1398px; letter-spacing: .2px; }
.tree li { height: 40px; display: flex; align-items: center; }
.tree .t { padding-bottom: 1px; }
.l0 { padding-left: 16px; } .l1 { padding-left: 77px; } .l2 { padding-left: 108px; } .lg { padding-left: 21px; }
.tree .i32, .tree .d32, .tree .tr, .tree .tr2 { margin-right: 13px; }
.tree .i32, .tree .d32, .tree .tr2 { position: relative; top: 1px; }
.dn { width: 18px; height: 16px; background: #868686; clip-path: polygon(0 0, 100% 0, 50% 100%); margin: -3px 14px 0 0; }
.bx { width: 32px; height: 28px; margin-right: 12px; }
.d32 { width: 32px; height: 32px; }
.tr { width: 24px; height: 30px; margin-left: 8px; }
.tr2 { width: 30px; height: 30px; margin-left: 2px; }
.sel { background: linear-gradient(#b0b0b0, #898989); border-top: 2px solid #929292; color: #fff; font-weight: 700; }
.sel .t { margin-top: -3px; }
.l1.sel { padding-left: 46px; }
.sel .dn { background: #fff; margin-right: 13px; }
.split { height: 17px; background: linear-gradient(#fdfdfd, #e6e6e6); display: flex; justify-content: center; align-items: center; }
.split i { width: 8px; height: 8px; border-radius: 50%; background: #a9a9a9; border: 1px solid #8a8a8a; margin-top: -2px; }
.tags { height: 200px; background: #fff; overflow: hidden; padding-left: 14px; line-height: 46px; letter-spacing: .3px; }
.tags p { display: flex; gap: 23px; height: 46px; }
.tags p:first-child { margin-top: -2px; }
.tags .cut { gap: 0; padding-top: 14px; }
.cut i { width: 3px; height: 2px; background: #555; margin-left: 98px; }
.cut i + i { margin-left: 109px; } .cut i + i + i { margin-left: 69px; }
.find { flex: 1; background: #ebebeb; border-top: 2px solid #d6d6d6; display: flex; padding: 11px 0 0 13px; }
.field { width: 429px; height: 41px; background: #fff; border: 1px solid #d0d0d0; border-bottom: 2px solid #b3b3b3; border-radius: 9px; padding: 6px 0 0 12px; }
.field svg { width: 28px; height: 28px; }
.sw { display: grid; grid-template-columns: repeat(3, 6px); grid-auto-rows: 6px; gap: 2px; margin: 7px 6px 0 8px; height: 22px; }
.c1 { background: #fb6b64; } .c2 { background: #f7a35d; } .c3 { background: #f0cf5b; } .c4 { background: #c8e8a5; } .c5 { background: #4cc267; } .c6 { background: #55a8ea; } .c7 { background: #5574b4; } .c8 { background: #d08ddb; } .c9 { background: #fb7db6; }
.find .dd { margin-top: 15px; }

/* items */
.list { width: 1702px; border-right: 2px solid #b9b9b9; overflow: hidden; letter-spacing: .4px; }
.head { height: 42px; border-bottom: 2px solid #c9c9c9; background: #f6f6f6; padding-left: 18px; line-height: 38px; letter-spacing: .6px; }
.rows li { display: flex; height: 40px; align-items: center; padding-left: 18px; }
.rows li:nth-child(even) { background: #f4f5f5; }
.rows svg { width: 28px; height: 32px; margin-right: 12px; }
.rows svg.cap { width: 32px; height: 29px; margin: 0 10px 0 -2px; }
.rows .t { width: 1147px; overflow: hidden; padding-bottom: 2px; }
.tw { width: 16px; height: 18px; background: #868686; clip-path: polygon(0 0, 100% 50%, 0 100%); margin-right: 16px; }
.tw.no { visibility: hidden; }
.by { border-left: 2px solid #c9c9c9; width: 416px; padding-left: 8px; line-height: 30px; height: 32px; }
.at { border-left: 2px solid #c9c9c9; height: 32px; flex: 1; display: flex; align-items: center; padding-left: 12px; }
.rows .pdf { width: 19px; height: 22px; margin: 3px 0 0; }
.pdf-t { font: 700 5px "Liberation Sans", sans-serif; fill: #fff; letter-spacing: 0; }
.dot { width: 12px; height: 12px; border-radius: 50%; background: #7cc8f4; border: 3px solid #1786c4; margin: 3px 0 0 4px; }
.info { flex: 1; display: flex; justify-content: center; align-items: center; color: #7d7d7d; padding: 0 0 3px; }

/* preferences window */
.win { position: absolute; left: 840px; top: 50px; width: 1386px; height: 1594px; border-radius: 20px; background: #ececec; box-shadow: 0 0 0 1px rgba(0,0,0,.25), 0 36px 76px rgba(0,0,0,.55); display: flex; flex-direction: column; font-size: 26px; line-height: 32px; letter-spacing: .5px; }
.title { height: 58px; border-radius: 20px 20px 0 0; background: linear-gradient(#ededed, #d5d5d5); border-bottom: 2px solid #b9b9b9; box-shadow: inset 0 2px 0 #f8f8f8; display: flex; align-items: center; gap: 16px; padding-left: 16px; }
.title i { width: 24px; height: 24px; border-radius: 50%; background: #d2d2d2; border: 1px solid #bababa; }
.title i.red { background: #ed6a5f; border-color: #e0564c; }
.title b { color: #4d4d4d; margin: -4px 0 0 468px; letter-spacing: -.2px; }
.panes { height: 109px; background: #d3d3d3; border-bottom: 2px solid #b1b1b1; display: flex; padding-left: 8px; font-size: 22px; letter-spacing: .25px; }
.pane { width: 121px; display: flex; flex-direction: column; align-items: center; padding-top: 9px; line-height: 28px; white-space: nowrap; text-shadow: 0 1px 0 #eee; }
.pane svg { width: 64px; height: 64px; }
.pane.adv { width: 129px; }
.pane.bbt { width: 164px; background: linear-gradient(#d3d3d3, #aeaeae 50%, #d0d0d0); border: solid; border-width: 0 3px; border-image: linear-gradient(#d3d3d3, #8f8f8f 50%, #d3d3d3) 1; }
.tex { font: 26px "Liberation Serif", serif; fill: #222; letter-spacing: 0; text-shadow: none; }
.body { flex: 1; padding: 25px 35px 0 34px; position: relative; }
.seg { width: 955px; height: 44px; margin-left: 181px; border: 1px solid #d3d3d3; border-radius: 11px; background: rgba(0,0,0,.05); display: flex; position: relative; z-index: 1; line-height: 40px; white-space: nowrap; }
.seg span { text-align: center; height: 42px; }
.s1 { width: 209px; } .s2 { width: 128px; } .s3 { width: 265px; } .s4 { width: 132px; } .s5 { flex: 1; }
.seg .s1, .seg .s4 { background: linear-gradient(#c6c6c6, #c6c6c6) right center / 2px 24px no-repeat; }
.seg .cur { height: 47px; margin: -2px -1px 0; width: 267px; border: 4px solid #82b2ec; border-radius: 12px; background: #fff; line-height: 36px; }
.panel { margin-top: -23px; height: 948px; border: 1px solid #dadada; border-radius: 10px; background: #e4e4e4; padding: 41px 30px 0 23px; }
.note { padding-left: 2px; white-space: nowrap; }
.auto { display: flex; height: 120px; padding: 19px 0 0 2px; }
.auto label { width: 250px; } .auto .pop { width: 224px; padding-top: 12px; }
.auto .st { margin-top: 11px; }
.st { width: 32px; height: 32px; }
.libs { width: 1055px; height: 44px; margin-left: 4px; border: 1px solid #cdcdcd; border-radius: 11px; background: #d9d9d9; display: flex; line-height: 40px; letter-spacing: .25px; }
.libs span { width: 211.4px; display: flex; padding-left: 23px; background: linear-gradient(#c2c2c2, #c2c2c2) right center / 2px 24px no-repeat; white-space: nowrap; }
.libs span:last-child { background: none; }
.libs svg { width: 26px; height: 26px; margin: 7px 9px 0 0; }
.job { margin-top: 1px; height: 664px; border: 1px solid #d0d0d0; border-radius: 9px; background: #dcdcdc; padding: 41px 12px 0 25px; }
dl { display: grid; grid-template-columns: 154px 1fr; grid-auto-rows: 45.8px; white-space: nowrap; }
dd { padding-top: 1px; overflow: hidden; }
.path { padding-left: 2px; }
.chk { display: flex; height: 52px; align-items: center; gap: 6px; }
.chk i { width: 28px; height: 28px; border-radius: 6px; background: #e4e4e4; }
dl + .chk { margin-top: -2px; }
.doi { display: flex; height: 60px; padding-top: 2px; white-space: nowrap; }
.doi label { width: 616px; }
.pop2 { width: 194px; height: 40px; margin-top: 7px; background: #e5e5e5; border-radius: 9px; display: flex; justify-content: space-between; align-items: center; padding: 0 4px 0 16px; }
.acts { display: flex; margin: 12px 0 0 4px; line-height: 38px; text-align: center; white-space: nowrap; }
.acts span { height: 40px; border-radius: 9px; background: #e5e5e5; }
.acts .b1 { width: 150px; margin-right: 32px; padding-left: 3px; } .b2 { width: 175px; margin-right: 32px; } .b3 { width: 150px; margin-right: 15px; }
.help { position: absolute; right: 36px; bottom: 34px; width: 40px; height: 40px; border-radius: 50%; background: #e2e2e2; text-align: center; line-height: 40px; color: #333; font-size: 30px; font-weight: 500; letter-spacing: 0; }

/* tracking */
.k0 { letter-spacing: 0; } .k1 { letter-spacing: .1px; } .k2 { letter-spacing: .2px; } .k25 { letter-spacing: .25px; } .k3 { letter-spacing: .3px; } .k4 { letter-spacing: .4px; } .k5 { letter-spacing: .5px; } .k55 { letter-spacing: .55px; } .k6 { letter-spacing: .6px; } .k65 { letter-spacing: .65px; } .k7 { letter-spacing: .7px; } .k9 { letter-spacing: .9px; } .k11 { letter-spacing: 1.13px; }
```
